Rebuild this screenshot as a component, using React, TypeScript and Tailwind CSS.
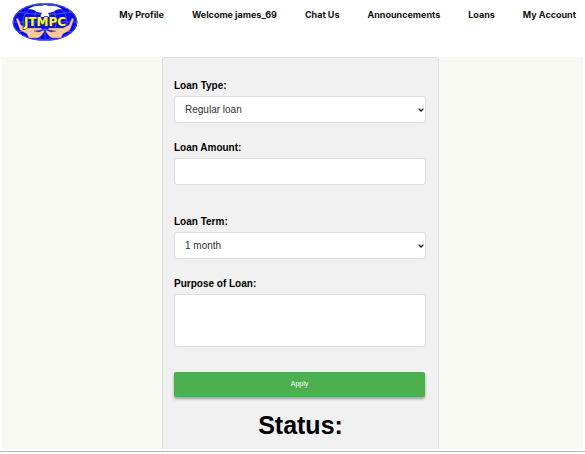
import type { ReactNode } from "react";

const links = ["My Profile", "Welcome james_69", "Chat Us", "Announcements", "Loans", "My Account"];

function Logo() {
  return (
    <svg viewBox="0 0 66 40" className="h-10 w-[66px] shrink-0" role="img" aria-label="JTMPC">
      <ellipse cx="33" cy="20" rx="32.5" ry="19" fill="#0808f4" />
      <g fill="none" stroke="#5a78c8" strokeWidth="0.7">
        <ellipse cx="33" cy="20" rx="31.8" ry="18.5" />
        <ellipse cx="33" cy="20" rx="22" ry="18.5" />
        <ellipse cx="33" cy="20" rx="11" ry="18.5" />
        <path d="M33 1v38M1 20h64M6 10q27 5 54 0M6 30q27-5 54 0" />
      </g>
      <path d="M16 7q7-4 13-3l3-1h2l3 1q7-1 13 3-6 0-9 3l-5 1 2 4H28l2-4-5-1q-3-3-9-3z" fill="#fff" />
      <path
        d="M4 17l2-1 3 7 6 3 14 0q2 1 0 2l-7 1 5 1 5-2 0 2-3 4-3 2H17l-2-4-7-4zM62 17l-2-1-3 7-6 3-14 0q-2 1 0 2l7 1-5 1-5-2 0 2 3 4 3 2h9l2-4 7-4z"
        fill="#fbc8a0"
        stroke="#6a4a80"
        strokeWidth="0.4"
      />
      <text
        x="33"
        y="24"
        textAnchor="middle"
        fontSize="12"
        fontWeight="bold"
        fontFamily="'DejaVu Sans', Verdana, sans-serif"
        fill="#fff838"
        stroke="#20208c"
        strokeWidth="1.4"
        paintOrder="stroke"
      >
        JTMPC
      </text>
    </svg>
  );
}

function Field({ id, label, children }: { id: string; label: string; children: ReactNode }) {
  return (
    <div className="flex flex-col gap-[2px]">
      <label htmlFor={id} className="text-[10px] leading-4 font-bold text-black">
        {label}
      </label>
      {children}
    </div>
  );
}

const control = "w-full rounded-[3px] border border-[#dedede] bg-white px-[10px] text-[10px] text-[#333]";

function Select({ id, options }: { id: string; options: string[] }) {
  return (
    <div className="relative">
      <select id={id} className={`${control} block h-[27px] appearance-none`}>
        {options.map((option) => (
          <option key={option}>{option}</option>
        ))}
      </select>
      <svg
        viewBox="0 0 6 4"
        className="pointer-events-none absolute top-3 right-[2px] h-1 w-[6px]"
        fill="none"
        stroke="#111"
        strokeWidth="1.3"
        aria-hidden="true"
      >
        <path d="M.6.6 3 3 5.4.6" />
      </svg>
    </div>
  );
}

export default function App() {
  return (
    <div className="bg-white font-['Liberation_Sans',Arial,sans-serif]">
      <div className="border-b border-[#b4b4b4] px-[2px] pb-[2px]">
        <header className="flex h-[57px] items-start justify-between pt-[2px] pr-[7px] pl-[10px]">
          <Logo />
          <nav className="flex gap-7 pt-[6px] font-['Inter',sans-serif] text-[9px] leading-[14px] font-bold whitespace-nowrap text-[#111]">
            {links.map((link) => (
              <a key={link} href="#">
                {link}
              </a>
            ))}
          </nav>
        </header>
        <main className="flex justify-center bg-[#f8f9f3] pl-4">
          <form className="w-[277px] rounded-t-[3px] border border-b-0 border-[#dedede] bg-[#f1f1f1] px-[11px] pt-5 pb-[9px]">
            <div className="flex flex-col gap-[17px] pr-px">
              <Field id="type" label="Loan Type:">
                <Select id="type" options={["Regular loan"]} />
              </Field>
              <Field id="amount" label="Loan Amount:">
                <input id="amount" type="text" className={`${control} h-[27px]`} />
              </Field>
              <div className="pt-3">
                <Field id="term" label="Loan Term:">
                  <Select id="term" options={["1 month"]} />
                </Field>
              </div>
              <Field id="purpose" label="Purpose of Loan:">
                <textarea id="purpose" className={`${control} block h-[53px] resize-none`} />
              </Field>
            </div>
            <div className="pt-[25px] pr-[2px]">
              <button
                type="button"
                className="block h-[25px] w-full rounded-[2px] bg-[#4caf50] text-[7px] text-white shadow-[0_2px_3px_rgba(0,0,0,0.35)]"
              >
                Apply
              </button>
            </div>
            <h1 className="pt-[13px] text-center text-[25px] leading-[30px] font-bold text-black">Status:</h1>
          </form>
        </main>
      </div>
    </div>
  );
}
